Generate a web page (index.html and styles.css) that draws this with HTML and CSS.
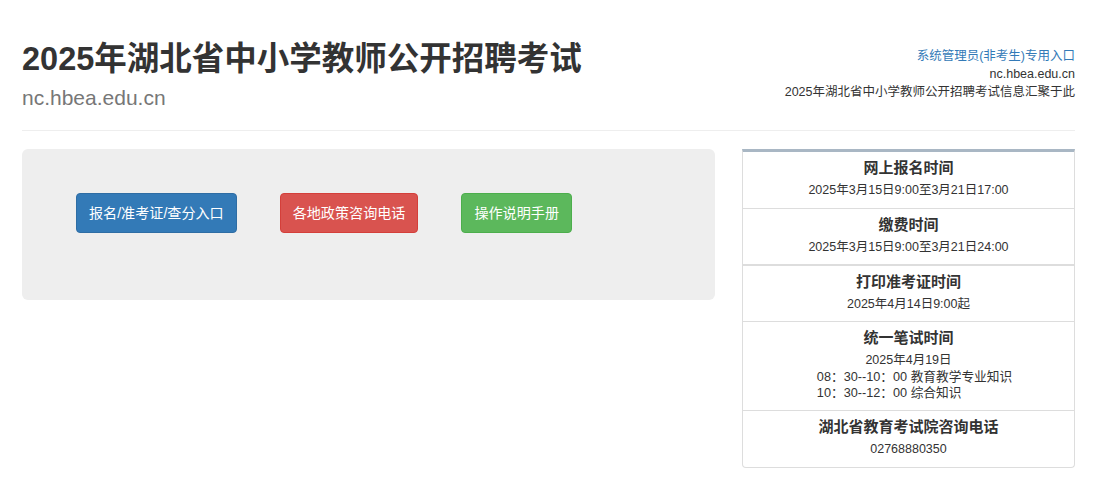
FILE: index.html
```html
<!DOCTYPE html>
<html lang="zh-CN">
<head>
    <meta charset="UTF-8">
    <meta name="viewport" content="width=device-width, initial-scale=1.0">
    <title>2025年湖北省中小学教师公开招聘考试</title>
    <link rel="stylesheet" href="styles.css">
</head>
<body>
<div class="container">

    <div class="header">
        <div class="brand">
            <h1 class="title">2025年湖北省中小学教师公开招聘考试</h1>
            <div class="subtitle">nc.hbea.edu.cn</div>
        </div>
        <div class="side-info">
            <a href="#" class="admin-link">系统管理员(非考生)专用入口</a>
            <div>nc.hbea.edu.cn</div>
            <div>2025年湖北省中小学教师公开招聘考试信息汇聚于此</div>
        </div>
    </div>

    <div class="main">
        <div class="panel">
            <a href="#" class="btn btn-blue">报名/准考证/查分入口</a>
            <a href="#" class="btn btn-red">各地政策咨询电话</a>
            <a href="#" class="btn btn-green">操作说明手册</a>
        </div>

        <div class="schedule">
            <div class="item first">
                <div class="item-title">网上报名时间</div>
                <div class="item-text">2025年3月15日9:00至3月21日17:00</div>
            </div>
            <div class="item split">
                <div class="item-title">缴费时间</div>
                <div class="item-text">2025年3月15日9:00至3月21日24:00</div>
            </div>
            <div class="item tight">
                <div class="item-title">打印准考证时间</div>
                <div class="item-text">2025年4月14日9:00起</div>
            </div>
            <div class="item">
                <div class="item-title">统一笔试时间</div>
                <div class="item-text">2025年4月19日</div>
                <div class="item-lines">
                    <div>08：30--10：00 教育教学专业知识</div>
                    <div>10：30--12：00 综合知识</div>
                </div>
            </div>
            <div class="item last">
                <div class="item-title">湖北省教育考试院咨询电话</div>
                <div class="item-text">02768880350</div>
            </div>
        </div>
    </div>

</div>
</body>
</html>
```

FILE: styles.css
```css
body {
    margin: 0;
    font-family: "Liberation Sans", Arial, "Noto Sans CJK SC", sans-serif;
    color: #333;
    background-color: #fff;
}
a {
    text-decoration: none;
}
.container {
    padding: 0 27px 0 22px;
}

/* header */
.header {
    display: flex;
    justify-content: space-between;
    padding-top: 38px;
    padding-bottom: 19px;
    border-bottom: 1px solid #eee;
}
.title {
    margin: 0;
    font-size: 32.5px;
    line-height: 42px;
    font-weight: bold;
    color: #333;
}
.subtitle {
    margin-top: 5px;
    font-size: 21px;
    line-height: 26px;
    color: #777;
}
.side-info {
    padding-top: 9px;
    text-align: right;
    font-size: 12.5px;
    line-height: 18px;
    color: #333;
}
.admin-link {
    display: block;
    color: #337ab7;
}

/* main area */
.main {
    display: flex;
    justify-content: space-between;
    align-items: flex-start;
    margin-top: 18px;
}
.panel {
    display: flex;
    gap: 43px;
    width: 693px;
    box-sizing: border-box;
    padding: 44px 54px 67px;
    background-color: #eee;
    border-radius: 6px;
}
.btn {
    display: block;
    padding: 0 12px;
    font-size: 14.1px;
    line-height: 38px;
    color: #fff;
    border: 1px solid transparent;
    border-radius: 4px;
}
.btn-blue {
    background-color: #337ab7;
    border-color: #2e6da4;
}
.btn-red {
    background-color: #d9534f;
    border-color: #d43f3a;
}
.btn-green {
    background-color: #5cb85c;
    border-color: #4cae4c;
}

/* schedule list */
.schedule {
    width: 333px;
    text-align: center;
}
.item {
    padding: 6px 15px 9px;
    border: 1px solid #ddd;
    border-top: none;
    background-color: #fff;
}
.item.first {
    border-top: 3px solid #a9b7c4;
}
.item.split {
    padding-bottom: 8px;
    border-bottom: 2px solid #ddd;
}
.item.tight {
    padding-bottom: 8px;
}
.item.last {
    border-radius: 0 0 4px 4px;
}
.item-title {
    font-size: 15px;
    line-height: 20px;
    font-weight: bold;
}
.item-text {
    margin-top: 4px;
    font-size: 12.5px;
    line-height: 17px;
}
.item-lines {
    display: inline-block;
    padding-left: 12px;
    text-align: left;
    font-size: 12.7px;
    line-height: 16px;
}
```
